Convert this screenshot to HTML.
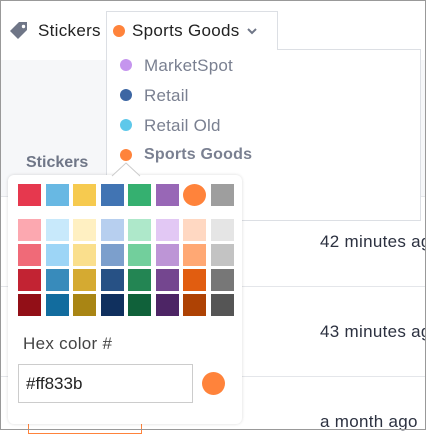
<!DOCTYPE html><html><head><style>
body{margin:0;width:426px;height:430px;overflow:hidden;font-family:"Liberation Sans",sans-serif;position:relative;background:#fff}
.a{position:absolute}
.frame{left:0;top:0;width:424px;height:428px;border:1px solid #999;box-sizing:content-box}
.sw{position:absolute;width:23px;height:22px}
.t{font-size:17px;color:#2c3140;white-space:nowrap;letter-spacing:0.3px}
.m{font-size:17px;color:#7a8091;white-space:nowrap;letter-spacing:0.2px}
.d{position:absolute;width:12px;height:12px;border-radius:50%}
</style></head><body>
<div class="a" style="left:0;top:60px;width:426px;height:137px;background:#f6f7f9"></div>
<div class="a" style="left:0;top:196px;width:426px;height:1px;background:#e4e6ea"></div>
<div class="a" style="left:0;top:286px;width:426px;height:1px;background:#e4e6ea"></div>
<div class="a" style="left:0;top:376px;width:426px;height:1px;background:#e4e6ea"></div>
<div class="a t" style="left:320px;top:232px">42 minutes ago</div>
<div class="a t" style="left:320px;top:322px">43 minutes ago</div>
<div class="a t" style="left:320px;top:412px">a month ago</div>
<div class="a" style="left:28px;top:414px;width:114px;height:20px;border:1px solid #ff833b;border-top:none;box-sizing:border-box"></div>
<svg class="a" style="left:9px;top:21px" width="20" height="20" viewBox="0 0 20 20"><path d="M10 1h8v8l-9 9-8-8z" fill="#6f7687"/><circle cx="14.5" cy="5.5" r="1.7" fill="#fff"/></svg>
<div class="a t" style="left:38px;top:21px;color:#222">Stickers</div>
<div class="a" style="left:106px;top:11px;width:172px;height:39px;border:1px solid #dcdfe4;border-bottom:none;box-sizing:border-box;background:#fff"></div>
<div class="d" style="left:113px;top:25px;background:#ff833b"></div>
<div class="a t" style="left:132px;top:21px;color:#222">Sports Goods</div>
<svg class="a" style="left:246px;top:27px" width="12" height="8"><path d="M2 2l4 4 4-4" stroke="#6f7687" stroke-width="2" fill="none"/></svg>
<div class="a" style="left:106px;top:49px;width:315px;height:172px;border:1px solid #dcdfe4;border-top:none;box-sizing:border-box;background:#fff"></div>
<div class="a" style="left:277px;top:49px;width:144px;height:1px;background:#dcdfe4"></div>
<div class="d" style="left:120px;top:59px;background:#c595ee"></div>
<div class="a m" style="left:144px;top:56px">MarketSpot</div>
<div class="d" style="left:120px;top:89px;background:#3c66a3"></div>
<div class="a m" style="left:144px;top:86px">Retail</div>
<div class="d" style="left:120px;top:119px;background:#5ec8ea"></div>
<div class="a m" style="left:144px;top:116px">Retail Old</div>
<div class="d" style="left:120px;top:149px;background:#ff833b"></div>
<div class="a m" style="left:144px;top:146px;font-weight:bold;font-size:16px">Sports Goods</div>
<div class="a" style="left:26px;top:154px;font-size:16px;font-weight:bold;color:#6f7687">Stickers</div>
<div class="a" style="left:8px;top:175px;width:234px;height:249px;background:#fff;border-radius:6px;box-shadow:0 0 3px rgba(0,0,0,.15)"></div>
<svg class="a" style="left:111px;top:162px" width="30" height="15"><path d="M1 14L15 1l14 13" fill="#fff" stroke="#ccc"/></svg>
<div class="sw" style="left:18px;top:184px;background:#e6384e"></div><div class="sw" style="left:46px;top:184px;background:#68b8e3"></div><div class="sw" style="left:73px;top:184px;background:#f6ca4f"></div><div class="sw" style="left:101px;top:184px;background:#4174b3"></div><div class="sw" style="left:128px;top:184px;background:#35b070"></div><div class="sw" style="left:156px;top:184px;background:#9867b6"></div><div class="sw" style="left:183px;top:184px;background:#ff833b;border-radius:50%"></div><div class="sw" style="left:211px;top:184px;background:#9e9e9e"></div>
<div class="sw" style="left:18px;top:219px;background:#fca8b0"></div><div class="sw" style="left:46px;top:219px;background:#c8e9fb"></div><div class="sw" style="left:73px;top:219px;background:#fff0c2"></div><div class="sw" style="left:101px;top:219px;background:#b7cfef"></div><div class="sw" style="left:128px;top:219px;background:#aee8ca"></div><div class="sw" style="left:156px;top:219px;background:#e2c8f4"></div><div class="sw" style="left:183px;top:219px;background:#ffd8c2"></div><div class="sw" style="left:211px;top:219px;background:#e5e5e5"></div>
<div class="sw" style="left:18px;top:244px;background:#f06a78"></div><div class="sw" style="left:46px;top:244px;background:#9dd5f6"></div><div class="sw" style="left:73px;top:244px;background:#fadf8d"></div><div class="sw" style="left:101px;top:244px;background:#7c9fcc"></div><div class="sw" style="left:128px;top:244px;background:#72cf9c"></div><div class="sw" style="left:156px;top:244px;background:#bd95d6"></div><div class="sw" style="left:183px;top:244px;background:#ffa874"></div><div class="sw" style="left:211px;top:244px;background:#c3c3c3"></div>
<div class="sw" style="left:18px;top:269px;background:#c22333"></div><div class="sw" style="left:46px;top:269px;background:#388bbb"></div><div class="sw" style="left:73px;top:269px;background:#d5aa31"></div><div class="sw" style="left:101px;top:269px;background:#275185"></div><div class="sw" style="left:128px;top:269px;background:#238553"></div><div class="sw" style="left:156px;top:269px;background:#74468f"></div><div class="sw" style="left:183px;top:269px;background:#e15d10"></div><div class="sw" style="left:211px;top:269px;background:#777"></div>
<div class="sw" style="left:18px;top:294px;background:#920f17"></div><div class="sw" style="left:46px;top:294px;background:#126c9e"></div><div class="sw" style="left:73px;top:294px;background:#a98514"></div><div class="sw" style="left:101px;top:294px;background:#10305e"></div><div class="sw" style="left:128px;top:294px;background:#10613a"></div><div class="sw" style="left:156px;top:294px;background:#4d2565"></div><div class="sw" style="left:183px;top:294px;background:#ae4204"></div><div class="sw" style="left:211px;top:294px;background:#555"></div>
<div class="a" style="left:23px;top:334px;font-size:17px;color:#444;letter-spacing:0.3px">Hex color #</div>
<div class="a" style="left:18px;top:364px;width:175px;height:39px;border:1px solid #ccc;box-sizing:border-box"></div>
<div class="a" style="left:26px;top:374px;font-size:17px;color:#222">#ff833b</div>
<div class="a" style="left:202px;top:372px;width:23px;height:23px;border-radius:50%;background:#ff833b"></div>
<div class="a frame"></div>
</body></html>
